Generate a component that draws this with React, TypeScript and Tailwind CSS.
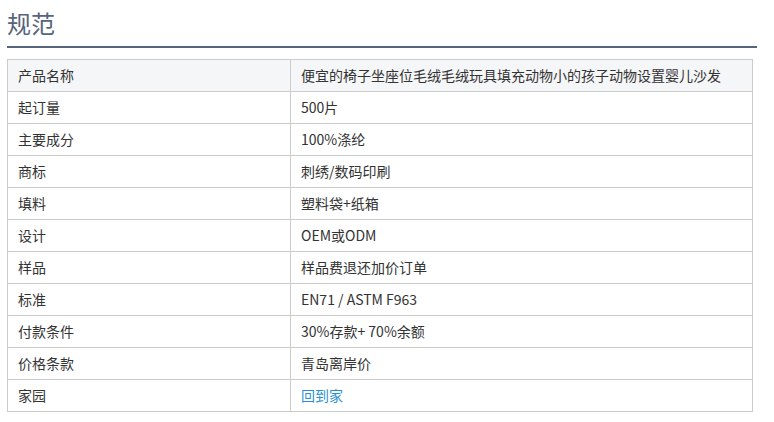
const rows: [string, string][] = [
  ['产品名称', '便宜的椅子坐座位毛绒毛绒玩具填充动物小的孩子动物设置婴儿沙发'],
  ['起订量', '500片'],
  ['主要成分', '100%涤纶'],
  ['商标', '刺绣/数码印刷'],
  ['填料', '塑料袋+纸箱'],
  ['设计', 'OEM或ODM'],
  ['样品', '样品费退还加价订单'],
  ['标准', 'EN71 / ASTM F963'],
  ['付款条件', '30%存款+ 70%余额'],
  ['价格条款', '青岛离岸价'],
];

const App = () => {
  return (
    <div className="w-[774px] h-[422px] bg-white pl-[7px] pr-[17px] pt-[7px]" style={{ fontFamily: '"Noto Sans CJK SC", "Liberation Sans", sans-serif' }}>
      <h2 className="text-[24px] leading-[32px] text-[#56657b] h-[39px]">规范</h2>
      <div className="h-[2px] bg-[#56657b]" />
      <table className="mt-[11px] w-[746px] border-collapse text-[14px] leading-[20px] text-[#333]">
        <tbody>
          {rows.map(([k, v], i) => (
            <tr key={k} className={i === 0 ? 'bg-[#f5f6f8]' : ''}>
              <td className="w-[283px] h-[32px] pt-0 pb-[2px] border border-[#cccccc] px-[10px]">{k}</td>
              <td className="h-[32px] pt-0 pb-[2px] border border-[#cccccc] px-[10px]">{v}</td>
            </tr>
          ))}
          <tr>
            <td className="w-[283px] h-[32px] pt-0 pb-[2px] border border-[#cccccc] px-[10px]">家园</td>
            <td className="h-[32px] pt-0 pb-[2px] border border-[#cccccc] px-[10px]">
              <a href="#" className="text-[#2a8fd5]">回到家</a>
            </td>
          </tr>
        </tbody>
      </table>
    </div>
  );
};

export default App;
